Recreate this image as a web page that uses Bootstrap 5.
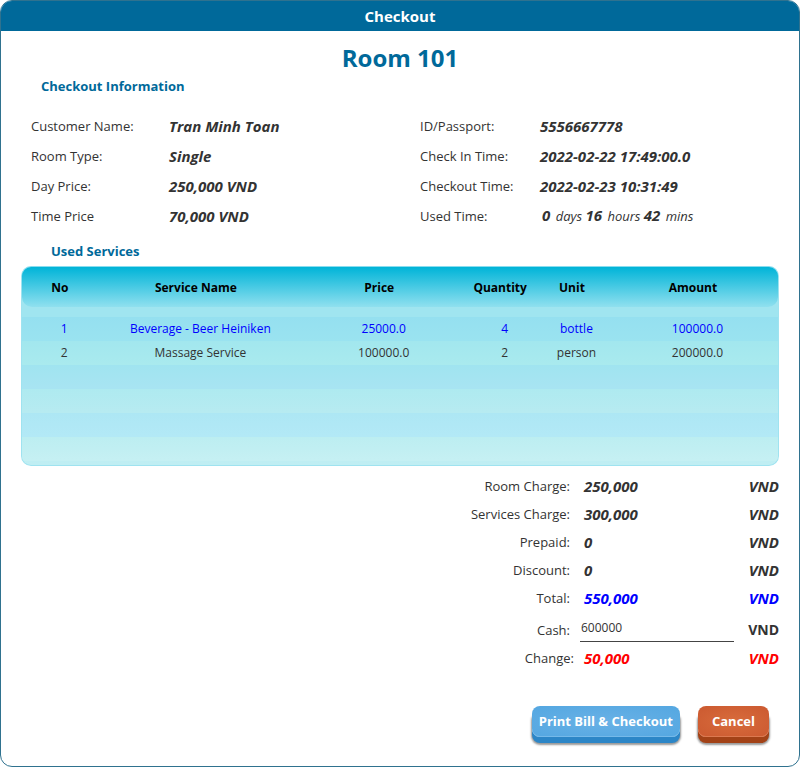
<!DOCTYPE html>
<html lang="en">
<head>
<meta charset="utf-8">
<meta name="viewport" content="width=device-width, initial-scale=1">
<title>Checkout</title>
<link href="https://cdn.jsdelivr.net/npm/bootstrap@5.3.0/dist/css/bootstrap.min.css" rel="stylesheet">
<style>
:root { --brand: #00699a; --ink: #333; }
body { font: 13px/20px "Open Sans", "Noto Sans", sans-serif; color: var(--ink); background: #fff; }
.checkout-window { border: 1px solid #2f728f; border-radius: 12px; background: #fff; overflow: hidden; }
.title-bar { background: var(--brand); color: #fff; font-size: 15px; line-height: 30px; font-weight: 700; margin: 0; }
.room-title { color: var(--brand); font-size: 24px; line-height: 36px; font-weight: 700; margin: 9px 0 0; }
.section-title { color: var(--brand); font-size: 13px; line-height: 20px; font-weight: 700; margin: 0; }
.section-title.services-title { padding-left: 30px; }
.content-area { padding: 0 20px; }
.info-grid { display: grid; grid-template-columns: 138fr 251fr 120fr 229fr; grid-auto-rows: 30px; line-height: 30px; margin: 15px 0 10px; padding: 0 10px; }
.info-grid dt { font-weight: 400; }
.info-grid dd, .totals dd { margin: 0; font-size: 15px; font-weight: 700; font-style: italic; }
.info-grid dd.used-time { font-size: 13px; font-weight: 400; padding-left: 2px; }
.used-time b { font-size: 15px; line-height: 20px; margin-right: 2px; }
.services { border: 1px solid #9fe3f0; border-top-color: #8adcee; border-radius: 10px; overflow: hidden; margin-top: 5px; background: linear-gradient(#a0e5f0 50px, #c0eef3); padding-bottom: 4px; }
.services table { width: 100%; table-layout: fixed; border-collapse: separate; border-spacing: 0; font-size: 12px; text-align: center; }
.services thead { color: #000; }
.services th { height: 40px; padding: 2px 0 0; font-weight: 700; background: linear-gradient(#00b4d8, #90e0ef); }
.services th:first-child { border-bottom-left-radius: 10px; }
.services th:last-child { border-bottom-right-radius: 10px; }
.services .spacer td { height: 10px; background: #a0e5f0; }
.services td { padding: 0 0 0 9px; height: 24px; }
.row-a td { background: linear-gradient(#95e0f0, #9ae3f0); color: #00f; }
.row-b td { background: linear-gradient(#a2e7ee, #a9eaee); }
.row-c td { background: linear-gradient(#a0e4f0, #a8e4f2); }
.row-d td { background: linear-gradient(#aeeaf0, #b7ebf1); }
.row-e td { background: linear-gradient(#ade7f4, #b3e9f6); }
.row-f td { background: linear-gradient(#bceef1, #c6f0f3); }
.totals { width: 320px; line-height: 28px; margin: 6px 0 0; }
.totals > div { display: grid; grid-template-columns: 121px 1fr 45px; align-items: end; }
.totals dt { font-weight: 400; text-align: right; padding-right: 10px; white-space: nowrap; }
.totals dd { padding-left: 4px; }
.totals dd.currency { padding: 0; text-align: right; }
.totals dd.upright { font-size: 14px; font-style: normal; }
.totals .change-row dt { padding-right: 6px; }
.blue-text { color: #00f; }
.red-text { color: #f00; }
.totals .cash-field { padding: 4px 0 2px; }
.totals .cash-field input { display: block; width: 100%; height: 26px; padding: 0 1px 2px; border: 0; border-bottom: 1px solid #444; border-radius: 0; font: 12px/23px "Open Sans", "Noto Sans", sans-serif; color: var(--ink); background: none; }
.button-row { gap: 18px; padding: 0 10px 23px 0; }
.action-btn { border: 0; border-radius: 8px; color: #fff; font-size: 13px; line-height: 19px; font-weight: 700; padding: 6px 7px; margin-bottom: 6px; }
.print-btn { background: radial-gradient(#68b1e6, #54a7e1); box-shadow: inset 0 -1px #75b9e9, 0 6px #2c86c7, 0 7px 2px 1px #999; }
.cancel-btn { background: radial-gradient(#d86c3c, #cb5930); box-shadow: inset 0 -1px #dc7950, 0 6px #a34217, 0 7px 2px 1px #999; padding: 6px 14px; }
</style>
<script src="https://cdn.jsdelivr.net/npm/bootstrap@5.3.0/dist/js/bootstrap.bundle.min.js"></script>
</head>
<body>
<main class="checkout-window min-vh-100 d-flex flex-column">
  <h1 class="title-bar text-center">Checkout</h1>
  <div class="content-area flex-grow-1 d-flex flex-column">
    <h2 class="room-title text-center">Room 101</h2>
    <h3 class="section-title ms-1 ps-3">Checkout Information</h3>
    <dl class="info-grid">
      <dt>Customer Name:</dt><dd>Tran Minh Toan</dd><dt>ID/Passport:</dt><dd>5556667778</dd>
      <dt>Room Type:</dt><dd>Single</dd><dt>Check In Time:</dt><dd>2022-02-22 17:49:00.0</dd>
      <dt>Day Price:</dt><dd>250,000 VND</dd><dt>Checkout Time:</dt><dd>2022-02-23 10:31:49</dd>
      <dt>Time Price</dt><dd>70,000 VND</dd><dt>Used Time:</dt><dd class="used-time"><b>0</b> days <b>16</b> hours <b>42</b> mins</dd>
    </dl>
    <h3 class="section-title services-title">Used Services</h3>
    <div class="services">
      <table>
        <colgroup><col style="width:10%"><col style="width:26%"><col style="width:22.5%"><col style="width:9.5%"><col style="width:9.5%"><col style="width:22.5%"></colgroup>
        <thead><tr><th>No</th><th>Service Name</th><th>Price</th><th>Quantity</th><th>Unit</th><th>Amount</th></tr></thead>
        <tbody>
          <tr class="spacer"><td colspan="6"></td></tr>
          <tr class="row-a"><td>1</td><td>Beverage - Beer Heiniken</td><td>25000.0</td><td>4</td><td>bottle</td><td>100000.0</td></tr>
          <tr class="row-b"><td>2</td><td>Massage Service</td><td>100000.0</td><td>2</td><td>person</td><td>200000.0</td></tr>
          <tr class="row-c"><td colspan="6"></td></tr>
          <tr class="row-d"><td colspan="6"></td></tr>
          <tr class="row-e"><td colspan="6"></td></tr>
          <tr class="row-f"><td colspan="6"></td></tr>
        </tbody>
      </table>
    </div>
    <dl class="totals ms-auto">
      <div><dt>Room Charge:</dt><dd>250,000</dd><dd class="currency">VND</dd></div>
      <div><dt>Services Charge:</dt><dd>300,000</dd><dd class="currency">VND</dd></div>
      <div><dt>Prepaid:</dt><dd>0</dd><dd class="currency">VND</dd></div>
      <div><dt>Discount:</dt><dd>0</dd><dd class="currency">VND</dd></div>
      <div><dt>Total:</dt><dd class="blue-text">550,000</dd><dd class="currency blue-text">VND</dd></div>
      <div><dt><label for="cash">Cash:</label></dt><dd class="cash-field"><input id="cash" type="text" value="600000"></dd><dd class="currency upright">VND</dd></div>
      <div class="change-row"><dt>Change:</dt><dd class="red-text">50,000</dd><dd class="currency red-text">VND</dd></div>
    </dl>
    <div class="button-row d-flex justify-content-end mt-auto">
      <button type="button" class="action-btn print-btn">Print Bill &amp; Checkout</button>
      <button type="button" class="action-btn cancel-btn">Cancel</button>
    </div>
  </div>
</main>
</body>
</html>
